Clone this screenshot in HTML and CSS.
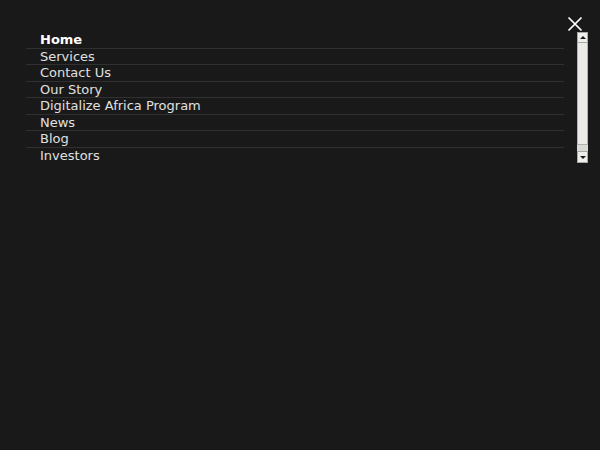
FILE: index.html
```html
<!DOCTYPE html>
<html lang="en">
<head>
    <meta charset="UTF-8">
    <meta name="viewport" content="width=device-width, initial-scale=1.0">
    <title>Menu</title>
    <link rel="stylesheet" href="styles.css">
</head>
<body>
    <div class="menu-panel">
        <div class="menu-top">
            <button class="close-btn" aria-label="Close menu">
                <svg width="16" height="16" viewBox="0 0 16 16">
                    <path d="M1.5 1.5 L14.5 14.5 M14.5 1.5 L1.5 14.5" stroke="#fff" stroke-width="1.7" fill="none"/>
                </svg>
            </button>
        </div>
        <div class="menu-body">
            <ul class="menu-list">
                <li class="active"><a href="#">Home</a></li>
                <li><a href="#">Services</a></li>
                <li><a href="#">Contact Us</a></li>
                <li><a href="#">Our Story</a></li>
                <li><a href="#">Digitalize Africa Program</a></li>
                <li><a href="#">News</a></li>
                <li><a href="#">Blog</a></li>
                <li><a href="#">Investors</a></li>
            </ul>
            <!-- scrollbar of the menu box -->
            <div class="scrollbar">
                <div class="sb-btn"><span class="arrow up"></span></div>
                <div class="sb-thumb"></div>
                <div class="sb-track"></div>
                <div class="sb-btn down"><span class="arrow down"></span></div>
            </div>
        </div>
    </div>
</body>
</html>
```

FILE: styles.css
```css
body {
    margin: 0;
    height: 100vh;
    background-color: #191919;
    font-family: "DejaVu Sans", sans-serif;
    color: #e6e6e6;
    overflow: hidden;
}

.menu-panel {
    padding: 16px 12px 0 26px;
}

.menu-top {
    display: flex;
    justify-content: flex-end;
    height: 16px;
}

.close-btn {
    background: none;
    border: none;
    padding: 0;
    margin-right: 5px;
    width: 16px;
    height: 16px;
    cursor: pointer;
}

.close-btn svg {
    display: block;
}

.menu-body {
    display: flex;
    gap: 13px;
    height: 131px;
}

.menu-list {
    flex: 1;
    list-style: none;
    margin: 0;
    padding: 0;
    overflow: hidden;
}

.menu-list li {
    border-top: 1px solid #303030;
    padding: 1px 0 0 14px;
    font-size: 13px;
    line-height: 14.5px;
}

.menu-list li:first-child {
    border-top: none;
}

.menu-list a {
    color: #e0e0e0;
    text-decoration: none;
}

.menu-list li.active a {
    color: #fff;
    font-weight: bold;
}

.scrollbar {
    width: 11px;
    display: flex;
    flex-direction: column;
    background: #d9d9d5;
}

.sb-btn {
    height: 9px;
    background: #efefeb;
    border: 1px solid #a8a8a4;
    display: flex;
    align-items: center;
    justify-content: center;
}

.sb-btn.down {
    height: 10px;
}

.arrow {
    width: 0;
    height: 0;
    border-left: 3px solid transparent;
    border-right: 3px solid transparent;
}

.arrow.up {
    border-bottom: 3px solid #1a1a1a;
}

.arrow.down {
    border-top: 3px solid #1a1a1a;
}

.sb-thumb {
    height: 101px;
    background: #ecebe7;
    border: 1px solid #b0b0ac;
    border-top: none;
}

.sb-track {
    flex: 1;
}
```
